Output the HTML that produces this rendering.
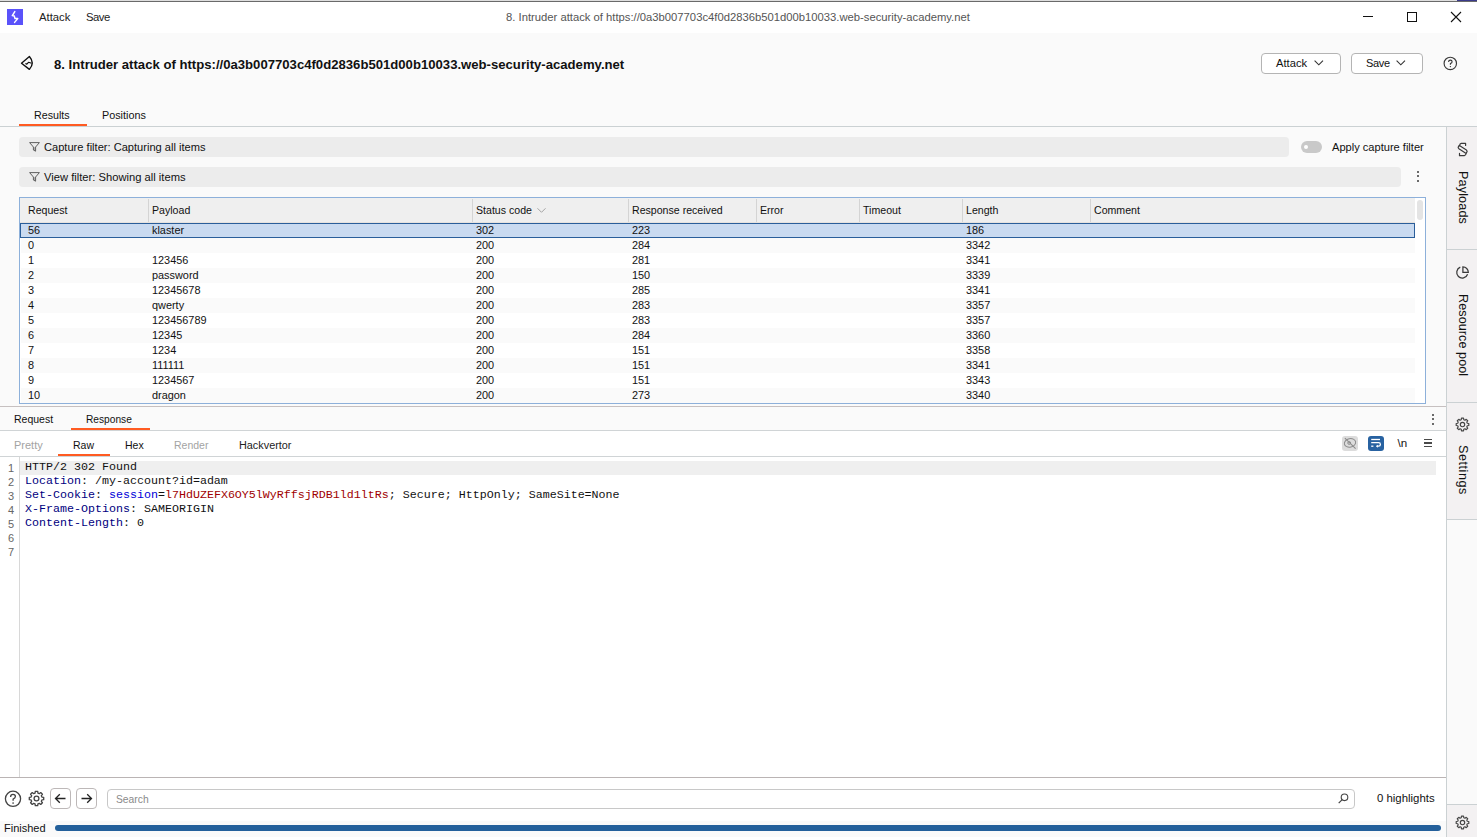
<!DOCTYPE html>
<html><head><meta charset="utf-8">
<style>
*{box-sizing:border-box;margin:0;padding:0}
html,body{width:1477px;height:837px;overflow:hidden}
body{position:relative;background:#fafafa;font-family:"Liberation Sans",sans-serif;color:#111;font-size:11px}
.a{position:absolute}
.t{position:absolute;white-space:nowrap;line-height:11px;font-size:11px}
.hl{position:absolute;height:1px}
.vl{position:absolute;width:1px}
svg{position:absolute;overflow:visible}
</style></head><body>

<!-- top strip -->
<div class="a" style="left:0;top:0;width:1477px;height:1px;background:#dedede"></div>
<div class="a" style="left:0;top:1px;width:1477px;height:1px;background:#6a6a6a"></div>
<div class="a" style="left:1457px;top:0;width:20px;height:1px;background:#3a3a8a"></div>

<!-- title bar -->
<div class="a" style="left:0;top:2px;width:1477px;height:31px;background:#ffffff"></div>
<div class="a" style="left:7px;top:9px;width:16px;height:16px;background:#5a52fa"></div>
<svg style="left:7px;top:9px" width="16" height="16" viewBox="0 0 16 16"><path d="M7.8 2.6 L5.3 6.6 L7.3 7.1 L8.0 9.5 L10.7 9.6 L7.6 13.4" fill="none" stroke="#fff" stroke-width="1.5" stroke-linejoin="round" stroke-linecap="round"/></svg>
<div class="t" style="left:39px;top:11.7px;font-size:11.3px;color:#222">Attack</div>
<div class="t" style="left:86px;top:11.7px;font-size:11.3px;letter-spacing:-0.5px;color:#222">Save</div>
<div class="t" style="left:506px;top:11.5px;font-size:11.25px;color:#555">8. Intruder attack of https://0a3b007703c4f0d2836b501d00b10033.web-security-academy.net</div>
<div class="a" style="left:1363px;top:16px;width:10px;height:1px;background:#111"></div>
<div class="a" style="left:1407px;top:12px;width:10px;height:10px;border:1px solid #111"></div>
<svg style="left:1451px;top:12px" width="10" height="10" viewBox="0 0 10 10"><path d="M0 0L10 10M10 0L0 10" stroke="#111" stroke-width="1.1"/></svg>


<!-- header -->
<svg style="left:20px;top:55px" width="16" height="16" viewBox="0 0 16 16"><path d="M1.5 8.2 L9.4 1.5 Q15.1 7.9 9.4 14.4 Z" fill="none" stroke="#111" stroke-width="1.35" stroke-linejoin="round"/><path d="M5.4 8.5 L6.8 9.2 L8.5 7.3 L11.6 8.3" fill="none" stroke="#111" stroke-width="1.2" stroke-linejoin="round"/></svg>
<div class="t" style="left:54px;top:57.8px;font-size:13.13px;line-height:13px;font-weight:bold;color:#111">8. Intruder attack of https://0a3b007703c4f0d2836b501d00b10033.web-security-academy.net</div>

<div class="a" style="left:1261px;top:53px;width:80px;height:21px;background:#fff;border:1px solid #b4b4b4;border-radius:4px"></div>
<div class="t" style="left:1276px;top:57.7px;font-size:11.2px;color:#111">Attack</div>
<svg style="left:1314px;top:60px" width="10" height="6" viewBox="0 0 10 6"><path d="M0.6 0.6 L4.8 4.8 L9 0.6" fill="none" stroke="#333" stroke-width="1.1"/></svg>
<div class="a" style="left:1351px;top:53px;width:72px;height:21px;background:#fff;border:1px solid #b4b4b4;border-radius:4px"></div>
<div class="t" style="left:1366px;top:57.7px;font-size:11px;letter-spacing:-0.3px;color:#111">Save</div>
<svg style="left:1396px;top:60px" width="10" height="6" viewBox="0 0 10 6"><path d="M0.6 0.6 L4.8 4.8 L9 0.6" fill="none" stroke="#333" stroke-width="1.1"/></svg>
<svg style="left:1443px;top:56px" width="15" height="15" viewBox="0 0 15 15"><circle cx="7.3" cy="7.4" r="6.2" fill="none" stroke="#3a3a3a" stroke-width="1.15"/><path d="M5.6 5.9 Q5.6 4.1 7.35 4.1 Q9.1 4.1 9.1 5.7 Q9.1 6.9 7.4 7.6 L7.4 8.8" fill="none" stroke="#333" stroke-width="1.1"/><circle cx="7.4" cy="10.6" r="0.7" fill="#333"/></svg>

<!-- tabs -->
<div class="t" style="left:34px;top:109.7px;font-size:10.7px;color:#111">Results</div>
<div class="t" style="left:102px;top:109.7px;font-size:10.8px;color:#111">Positions</div>
<div class="a" style="left:19px;top:124px;width:68px;height:2px;background:#ff5b22"></div>
<div class="a" style="left:0;top:126px;width:1477px;height:1px;background:#cbd1d3"></div>

<!-- sidebar -->
<div class="a" style="left:1446px;top:127px;width:1px;height:710px;background:#cbd1d3"></div>
<div class="a" style="left:1447px;top:127px;width:30px;height:392px;background:#f3f1f2"></div>
<div class="a" style="left:1447px;top:249px;width:30px;height:1px;background:#cbd1d3"></div>
<div class="a" style="left:1447px;top:402px;width:30px;height:1px;background:#cbd1d3"></div>
<div class="a" style="left:1447px;top:519px;width:30px;height:1px;background:#cbd1d3"></div>
<div class="a" style="left:1447px;top:804px;width:30px;height:1px;background:#cbd1d3"></div>
<div class="a" style="left:1447px;top:805px;width:30px;height:32px;background:#f3f1f2"></div>

<!-- filters -->
<div class="a" style="left:19px;top:137px;width:1270px;height:20px;background:#ececec;border-radius:4px"></div>
<svg style="left:28.5px;top:142px" width="11" height="10" viewBox="0 0 11 10"><path d="M4.6 5.2 L4.6 8.3 L6.4 9.3 L6.4 5.2 Z" fill="#aaa"/><path d="M0.6 0.6 L10.4 0.6 L6.6 5.0 L6.6 9.2 L4.4 8.0 L4.4 5.0 Z" fill="none" stroke="#606060" stroke-width="1" stroke-linejoin="round"/></svg>
<div class="t" style="left:44px;top:141.5px;font-size:11.1px;color:#111">Capture filter: Capturing all items</div>
<div class="a" style="left:1301px;top:141px;width:21px;height:12px;background:#c9c9c9;border-radius:6px"></div>
<div class="a" style="left:1304px;top:145px;width:4px;height:4px;background:#fff;border-radius:2px"></div>
<div class="t" style="left:1332px;top:141.5px;font-size:11.08px;color:#111">Apply capture filter</div>

<div class="a" style="left:19px;top:167px;width:1382px;height:20px;background:#ececec;border-radius:4px"></div>
<svg style="left:28.5px;top:172px" width="11" height="10" viewBox="0 0 11 10"><path d="M4.6 5.2 L4.6 8.3 L6.4 9.3 L6.4 5.2 Z" fill="#aaa"/><path d="M0.6 0.6 L10.4 0.6 L6.6 5.0 L6.6 9.2 L4.4 8.0 L4.4 5.0 Z" fill="none" stroke="#606060" stroke-width="1" stroke-linejoin="round"/></svg>
<div class="t" style="left:44px;top:171.5px;font-size:11.2px;color:#111">View filter: Showing all items</div>
<div class="a" style="left:1417.2px;top:170.5px;width:2.2px;height:2.2px;background:#3a3a3a;border-radius:50%"></div>
<div class="a" style="left:1417.2px;top:175.2px;width:2.2px;height:2.2px;background:#3a3a3a;border-radius:50%"></div>
<div class="a" style="left:1417.2px;top:179.8px;width:2.2px;height:2.2px;background:#3a3a3a;border-radius:50%"></div>

<!-- table -->
<div class="a" style="left:19px;top:197px;width:1407px;height:207px;background:#fff;border:1px solid #8db0da"></div>
<div class="a" style="left:20px;top:198px;width:1395px;height:25px;background:#efefef"></div>
<div class="a" style="left:20px;top:222px;width:1395px;height:1px;background:#e6e2de"></div>
<div class="a" style="left:148px;top:199px;width:1px;height:23px;background:#d4d4d4"></div>
<div class="a" style="left:472px;top:199px;width:1px;height:23px;background:#d4d4d4"></div>
<div class="a" style="left:628px;top:199px;width:1px;height:23px;background:#d4d4d4"></div>
<div class="a" style="left:756px;top:199px;width:1px;height:23px;background:#d4d4d4"></div>
<div class="a" style="left:859px;top:199px;width:1px;height:23px;background:#d4d4d4"></div>
<div class="a" style="left:962px;top:199px;width:1px;height:23px;background:#d4d4d4"></div>
<div class="a" style="left:1090px;top:199px;width:1px;height:23px;background:#d4d4d4"></div>
<div class="t" style="left:28px;top:204.5px;font-size:10.6px">Request</div>
<div class="t" style="left:152px;top:204.5px;font-size:10.6px">Payload</div>
<div class="t" style="left:476px;top:204.5px;font-size:10.6px">Status code</div>
<div class="t" style="left:632px;top:204.5px;font-size:10.6px">Response received</div>
<div class="t" style="left:760px;top:204.5px;font-size:10.6px">Error</div>
<div class="t" style="left:863px;top:204.5px;font-size:10.6px">Timeout</div>
<div class="t" style="left:966px;top:204.5px;font-size:10.6px">Length</div>
<div class="t" style="left:1094px;top:204.5px;font-size:10.6px">Comment</div>
<svg style="left:537px;top:208px" width="9" height="5" viewBox="0 0 9 5"><path d="M0.5 0.3 L4.5 4.3 L8.5 0.3" fill="none" stroke="#a4a4a4" stroke-width="1"/></svg>
<div class="a" style="left:1417px;top:200px;width:6px;height:20px;background:#e4e4e4;border-radius:3px"></div>
<div class="a" style="left:20px;top:223px;width:1395px;height:15px;background:#c9daf0;border:1px solid #2a5e9a;border-width:1px 1px 1px 1px"></div>
<div class="t" style="left:28px;top:225.4px;font-size:10.9px;color:#111">56</div>
<div class="t" style="left:152px;top:225.4px;font-size:10.9px;color:#111">klaster</div>
<div class="t" style="left:476px;top:225.4px;font-size:10.9px;color:#111">302</div>
<div class="t" style="left:632px;top:225.4px;font-size:10.9px;color:#111">223</div>
<div class="t" style="left:966px;top:225.4px;font-size:10.9px;color:#111">186</div>
<div class="a" style="left:21px;top:238px;width:1394px;height:15px;background:#fafafa"></div>
<div class="t" style="left:28px;top:240.4px;font-size:10.9px;color:#111">0</div>
<div class="t" style="left:476px;top:240.4px;font-size:10.9px;color:#111">200</div>
<div class="t" style="left:632px;top:240.4px;font-size:10.9px;color:#111">284</div>
<div class="t" style="left:966px;top:240.4px;font-size:10.9px;color:#111">3342</div>
<div class="t" style="left:28px;top:255.4px;font-size:10.9px;color:#111">1</div>
<div class="t" style="left:152px;top:255.4px;font-size:10.9px;color:#111">123456</div>
<div class="t" style="left:476px;top:255.4px;font-size:10.9px;color:#111">200</div>
<div class="t" style="left:632px;top:255.4px;font-size:10.9px;color:#111">281</div>
<div class="t" style="left:966px;top:255.4px;font-size:10.9px;color:#111">3341</div>
<div class="a" style="left:21px;top:268px;width:1394px;height:15px;background:#fafafa"></div>
<div class="t" style="left:28px;top:270.4px;font-size:10.9px;color:#111">2</div>
<div class="t" style="left:152px;top:270.4px;font-size:10.9px;color:#111">password</div>
<div class="t" style="left:476px;top:270.4px;font-size:10.9px;color:#111">200</div>
<div class="t" style="left:632px;top:270.4px;font-size:10.9px;color:#111">150</div>
<div class="t" style="left:966px;top:270.4px;font-size:10.9px;color:#111">3339</div>
<div class="t" style="left:28px;top:285.4px;font-size:10.9px;color:#111">3</div>
<div class="t" style="left:152px;top:285.4px;font-size:10.9px;color:#111">12345678</div>
<div class="t" style="left:476px;top:285.4px;font-size:10.9px;color:#111">200</div>
<div class="t" style="left:632px;top:285.4px;font-size:10.9px;color:#111">285</div>
<div class="t" style="left:966px;top:285.4px;font-size:10.9px;color:#111">3341</div>
<div class="a" style="left:21px;top:298px;width:1394px;height:15px;background:#fafafa"></div>
<div class="t" style="left:28px;top:300.4px;font-size:10.9px;color:#111">4</div>
<div class="t" style="left:152px;top:300.4px;font-size:10.9px;color:#111">qwerty</div>
<div class="t" style="left:476px;top:300.4px;font-size:10.9px;color:#111">200</div>
<div class="t" style="left:632px;top:300.4px;font-size:10.9px;color:#111">283</div>
<div class="t" style="left:966px;top:300.4px;font-size:10.9px;color:#111">3357</div>
<div class="t" style="left:28px;top:315.4px;font-size:10.9px;color:#111">5</div>
<div class="t" style="left:152px;top:315.4px;font-size:10.9px;color:#111">123456789</div>
<div class="t" style="left:476px;top:315.4px;font-size:10.9px;color:#111">200</div>
<div class="t" style="left:632px;top:315.4px;font-size:10.9px;color:#111">283</div>
<div class="t" style="left:966px;top:315.4px;font-size:10.9px;color:#111">3357</div>
<div class="a" style="left:21px;top:328px;width:1394px;height:15px;background:#fafafa"></div>
<div class="t" style="left:28px;top:330.4px;font-size:10.9px;color:#111">6</div>
<div class="t" style="left:152px;top:330.4px;font-size:10.9px;color:#111">12345</div>
<div class="t" style="left:476px;top:330.4px;font-size:10.9px;color:#111">200</div>
<div class="t" style="left:632px;top:330.4px;font-size:10.9px;color:#111">284</div>
<div class="t" style="left:966px;top:330.4px;font-size:10.9px;color:#111">3360</div>
<div class="t" style="left:28px;top:345.4px;font-size:10.9px;color:#111">7</div>
<div class="t" style="left:152px;top:345.4px;font-size:10.9px;color:#111">1234</div>
<div class="t" style="left:476px;top:345.4px;font-size:10.9px;color:#111">200</div>
<div class="t" style="left:632px;top:345.4px;font-size:10.9px;color:#111">151</div>
<div class="t" style="left:966px;top:345.4px;font-size:10.9px;color:#111">3358</div>
<div class="a" style="left:21px;top:358px;width:1394px;height:15px;background:#fafafa"></div>
<div class="t" style="left:28px;top:360.4px;font-size:10.9px;color:#111">8</div>
<div class="t" style="left:152px;top:360.4px;font-size:10.9px;color:#111">111111</div>
<div class="t" style="left:476px;top:360.4px;font-size:10.9px;color:#111">200</div>
<div class="t" style="left:632px;top:360.4px;font-size:10.9px;color:#111">151</div>
<div class="t" style="left:966px;top:360.4px;font-size:10.9px;color:#111">3341</div>
<div class="t" style="left:28px;top:375.4px;font-size:10.9px;color:#111">9</div>
<div class="t" style="left:152px;top:375.4px;font-size:10.9px;color:#111">1234567</div>
<div class="t" style="left:476px;top:375.4px;font-size:10.9px;color:#111">200</div>
<div class="t" style="left:632px;top:375.4px;font-size:10.9px;color:#111">151</div>
<div class="t" style="left:966px;top:375.4px;font-size:10.9px;color:#111">3343</div>
<div class="a" style="left:21px;top:388px;width:1394px;height:15px;background:#fafafa"></div>
<div class="t" style="left:28px;top:390.4px;font-size:10.9px;color:#111">10</div>
<div class="t" style="left:152px;top:390.4px;font-size:10.9px;color:#111">dragon</div>
<div class="t" style="left:476px;top:390.4px;font-size:10.9px;color:#111">200</div>
<div class="t" style="left:632px;top:390.4px;font-size:10.9px;color:#111">273</div>
<div class="t" style="left:966px;top:390.4px;font-size:10.9px;color:#111">3340</div>

<!-- splitter + req/resp tabs -->
<div class="a" style="left:0;top:406px;width:1446px;height:1px;background:#c6c0c0"></div>
<div class="a" style="left:0;top:407px;width:1446px;height:23px;background:#fafafa"></div>
<div class="t" style="left:14px;top:413.6px;font-size:10.5px">Request</div>
<div class="t" style="left:86px;top:413.6px;font-size:10.2px">Response</div>
<div class="a" style="left:71px;top:428px;width:79px;height:2px;background:#ff5b22"></div>
<div class="a" style="left:0;top:430px;width:1446px;height:1px;background:#d0d4d6"></div>
<div class="a" style="left:1432.2px;top:413.8px;width:2.2px;height:2.2px;background:#3a3a3a;border-radius:50%"></div>
<div class="a" style="left:1432.2px;top:418.3px;width:2.2px;height:2.2px;background:#3a3a3a;border-radius:50%"></div>
<div class="a" style="left:1432.2px;top:422.8px;width:2.2px;height:2.2px;background:#3a3a3a;border-radius:50%"></div>

<!-- editor toolbar -->
<div class="a" style="left:0;top:431px;width:1446px;height:25px;background:#ffffff"></div>
<div class="t" style="left:14px;top:440.2px;font-size:11px;color:#a3a3a3">Pretty</div>
<div class="t" style="left:73px;top:440.2px;font-size:10.5px">Raw</div>
<div class="t" style="left:125px;top:440.2px;font-size:10.5px">Hex</div>
<div class="t" style="left:174px;top:440.2px;font-size:10.5px;color:#a3a3a3">Render</div>
<div class="t" style="left:239px;top:440.2px;font-size:10.85px;color:#222">Hackvertor</div>
<div class="a" style="left:58px;top:454px;width:52px;height:2px;background:#ff5b22"></div>
<div class="a" style="left:0;top:456px;width:1446px;height:1px;background:#d0d4d6"></div>

<div class="a" style="left:1342px;top:436px;width:16px;height:15px;background:#dcdcdc;border-radius:3px"></div>
<svg style="left:1342px;top:436px" width="16" height="15" viewBox="0 0 16 15"><ellipse cx="8.0" cy="6.9" rx="5.7" ry="4.2" transform="rotate(-12 8 6.9)" fill="none" stroke="#8c8c8c" stroke-width="1"/><circle cx="7.2" cy="7.0" r="1.4" fill="none" stroke="#8c8c8c" stroke-width="1"/><path d="M2.9 2.2 L13.6 12.6" stroke="#8c8c8c" stroke-width="1.1"/></svg>
<div class="a" style="left:1368px;top:436px;width:16px;height:15px;background:#2862a1;border-radius:3px"></div>
<svg style="left:1368px;top:436px" width="16" height="15" viewBox="0 0 16 15"><g fill="none" stroke="#fff" stroke-width="1.3"><path d="M3.2 3.5 H12"/><path d="M3.2 6.6 H10.6 Q12.4 6.6 12.4 8.4 Q12.4 10.2 10.6 10.2 H8.6"/><path d="M3.2 10.2 H5.4"/></g><path d="M9.9 8.7 L8.0 10.2 L9.9 11.7 Z" fill="#fff"/></svg>
<div class="t" style="left:1397.5px;top:436.9px;font-size:11.6px;color:#111">\n</div>
<div class="a" style="left:1424px;top:439px;width:8px;height:1.3px;background:#4a4a4a"></div>
<div class="a" style="left:1424px;top:442.3px;width:8px;height:1.3px;background:#4a4a4a"></div>
<div class="a" style="left:1424px;top:445.6px;width:8px;height:1.3px;background:#4a4a4a"></div>

<!-- editor -->
<div class="a" style="left:0;top:457px;width:1446px;height:320px;background:#ffffff"></div>
<div class="a" style="left:19px;top:457px;width:1px;height:320px;background:#d8d8d8"></div>
<div class="a" style="left:20px;top:461px;width:1416px;height:14px;background:#efefef"></div>
<div class="t" style="left:8px;top:461.0px;font-size:11px;line-height:14px;color:#666">1</div>
<div class="t" style="left:25px;top:460px;font-family:'Liberation Mono',monospace;font-size:11.667px;line-height:14px"><span style="color:#111">HTTP/2 302 Found</span></div>
<div class="t" style="left:8px;top:475.0px;font-size:11px;line-height:14px;color:#666">2</div>
<div class="t" style="left:25px;top:474px;font-family:'Liberation Mono',monospace;font-size:11.667px;line-height:14px"><span style="color:#000080">Location</span><span style="color:#111">: /my-account?id=adam</span></div>
<div class="t" style="left:8px;top:489.0px;font-size:11px;line-height:14px;color:#666">3</div>
<div class="t" style="left:25px;top:488px;font-family:'Liberation Mono',monospace;font-size:11.667px;line-height:14px"><span style="color:#000080">Set-Cookie</span><span style="color:#111">: </span><span style="color:#0000d8">session</span><span style="color:#111">=</span><span style="color:#a00000">l7HdUZEFX6OY5lWyRffsjRDB1ld1ltRs</span><span style="color:#111">; Secure; HttpOnly; SameSite=None</span></div>
<div class="t" style="left:8px;top:503.0px;font-size:11px;line-height:14px;color:#666">4</div>
<div class="t" style="left:25px;top:502px;font-family:'Liberation Mono',monospace;font-size:11.667px;line-height:14px"><span style="color:#000080">X-Frame-Options</span><span style="color:#111">: SAMEORIGIN</span></div>
<div class="t" style="left:8px;top:517.0px;font-size:11px;line-height:14px;color:#666">5</div>
<div class="t" style="left:25px;top:516px;font-family:'Liberation Mono',monospace;font-size:11.667px;line-height:14px"><span style="color:#000080">Content-Length</span><span style="color:#111">: 0</span></div>
<div class="t" style="left:8px;top:531.0px;font-size:11px;line-height:14px;color:#666">6</div>
<div class="t" style="left:8px;top:545.0px;font-size:11px;line-height:14px;color:#666">7</div>

<div class="a" style="left:0;top:777px;width:1446px;height:1px;background:#bab4b4"></div>

<!-- bottom bar -->
<div class="a" style="left:0;top:778px;width:1446px;height:43px;background:#ffffff"></div>
<svg style="left:4px;top:790px" width="18" height="18" viewBox="0 0 18 18"><circle cx="9" cy="8.8" r="7.6" fill="none" stroke="#444" stroke-width="1.3"/><path d="M6.6 6.9 Q6.6 4.4 9 4.4 Q11.4 4.4 11.4 6.6 Q11.4 8.2 9.1 9.2 L9.1 10.8" fill="none" stroke="#444" stroke-width="1.3"/><circle cx="9.1" cy="13" r="0.85" fill="#444"/></svg>
<div class="a" style="left:50px;top:788px;width:21px;height:21px;border:1px solid #bdb8b8;border-radius:4px;background:#fff"></div>
<svg style="left:50px;top:788px" width="21" height="21" viewBox="0 0 21 21"><path d="M15.5 10.5 H5.5 M9.8 6.2 L5.5 10.5 L9.8 14.8" fill="none" stroke="#222" stroke-width="1.3"/></svg>
<div class="a" style="left:76px;top:788px;width:21px;height:21px;border:1px solid #bdb8b8;border-radius:4px;background:#fff"></div>
<svg style="left:76px;top:788px" width="21" height="21" viewBox="0 0 21 21"><path d="M5.5 10.5 H15.5 M11.2 6.2 L15.5 10.5 L11.2 14.8" fill="none" stroke="#222" stroke-width="1.3"/></svg>
<div class="a" style="left:107px;top:789px;width:1248px;height:20px;border:1px solid #c8c8c8;border-radius:4px;background:#fff"></div>
<div class="t" style="left:116px;top:793.5px;font-size:10.3px;color:#8a8a8a">Search</div>
<svg style="left:1338px;top:793.3px" width="11" height="11" viewBox="0 0 11 11"><circle cx="6.5" cy="4.3" r="3.3" fill="none" stroke="#444" stroke-width="1.1"/><path d="M4.2 6.6 L0.7 10.1" stroke="#444" stroke-width="1.2"/></svg>
<div class="t" style="left:1377px;top:793.4px;font-size:11.4px">0 highlights</div>

<!-- status -->
<div class="a" style="left:0;top:821px;width:1446px;height:16px;background:#fafafa"></div>
<div class="t" style="left:4px;top:822.6px;font-size:11px">Finished</div>
<div class="a" style="left:55px;top:825px;width:1386px;height:6px;background:#24609b;border-radius:3px"></div>


<!-- gears -->
<svg style="left:27.8px;top:790.2px" width="17" height="17" viewBox="0 0 17 17"><path d="M7.06 3.09 L7.30 1.30 L9.70 1.30 L9.94 3.09 L11.31 3.66 L12.74 2.56 L14.44 4.26 L13.34 5.69 L13.91 7.06 L15.70 7.30 L15.70 9.70 L13.91 9.94 L13.34 11.31 L14.44 12.74 L12.74 14.44 L11.31 13.34 L9.94 13.91 L9.70 15.70 L7.30 15.70 L7.06 13.91 L5.69 13.34 L4.26 14.44 L2.56 12.74 L3.66 11.31 L3.09 9.94 L1.30 9.70 L1.30 7.30 L3.09 7.06 L3.66 5.69 L2.56 4.26 L4.26 2.56 L5.69 3.66 Z" fill="none" stroke="#444" stroke-width="1.3" stroke-linejoin="round"/><circle cx="8.5" cy="8.5" r="2.4" fill="none" stroke="#444" stroke-width="1.3"/></svg>
<svg style="left:1455px;top:417px" width="15" height="15" viewBox="0 0 15 15"><path d="M6.23 2.72 L6.45 1.19 L8.55 1.19 L8.77 2.72 L9.99 3.22 L11.22 2.29 L12.71 3.78 L11.78 5.01 L12.28 6.23 L13.81 6.45 L13.81 8.55 L12.28 8.77 L11.78 9.99 L12.71 11.22 L11.22 12.71 L9.99 11.78 L8.77 12.28 L8.55 13.81 L6.45 13.81 L6.23 12.28 L5.01 11.78 L3.78 12.71 L2.29 11.22 L3.22 9.99 L2.72 8.77 L1.19 8.55 L1.19 6.45 L2.72 6.23 L3.22 5.01 L2.29 3.78 L3.78 2.29 L5.01 3.22 Z" fill="none" stroke="#444" stroke-width="1.15" stroke-linejoin="round"/><circle cx="7.5" cy="7.5" r="2.2" fill="none" stroke="#444" stroke-width="1.15"/></svg>
<svg style="left:1455px;top:815px" width="15" height="15" viewBox="0 0 15 15"><path d="M6.23 2.72 L6.45 1.19 L8.55 1.19 L8.77 2.72 L9.99 3.22 L11.22 2.29 L12.71 3.78 L11.78 5.01 L12.28 6.23 L13.81 6.45 L13.81 8.55 L12.28 8.77 L11.78 9.99 L12.71 11.22 L11.22 12.71 L9.99 11.78 L8.77 12.28 L8.55 13.81 L6.45 13.81 L6.23 12.28 L5.01 11.78 L3.78 12.71 L2.29 11.22 L3.22 9.99 L2.72 8.77 L1.19 8.55 L1.19 6.45 L2.72 6.23 L3.22 5.01 L2.29 3.78 L3.78 2.29 L5.01 3.22 Z" fill="none" stroke="#444" stroke-width="1.15" stroke-linejoin="round"/><circle cx="7.5" cy="7.5" r="2.2" fill="none" stroke="#444" stroke-width="1.15"/></svg>

<!-- sidebar content -->
<svg style="left:1450px;top:136px" width="24" height="24" viewBox="0 0 24 24"><g fill="none" stroke="#3a3a3a" stroke-width="1.2" stroke-linejoin="round" stroke-linecap="round"><path d="M15.6 9.4 L15.6 7.4 L11.2 7.4 Q9.9 7.5 9.5 9.7"/><path d="M9.8 9.7 L16.4 14.0 Q17.8 15.2 16.6 16.6 Q16.0 17.4 15.0 16.8 L8.9 12.8 Q7.6 11.8 8.5 10.4 Q9.0 9.5 9.8 9.7 Z"/><path d="M16.2 16.9 Q15.9 19.5 14.4 19.7 L9.5 19.7 L9.5 17.4"/></g></svg>
<div class="t" style="left:1468px;top:171.3px;font-size:12.6px;letter-spacing:0.15px;color:#111;transform-origin:0 0;transform:rotate(90deg)">Payloads</div>
<svg style="left:1450px;top:260px" width="24" height="24" viewBox="0 0 24 24"><g fill="none" stroke="#3a3a3a" stroke-width="1.25" stroke-linejoin="miter"><path d="M10.28 7.2 A5.6 5.6 0 1 0 17.6 14.3"/><path d="M12.9 6.9 L12.9 12.3 L18.3 12.3 A5.4 5.4 0 0 0 12.9 6.9 Z"/></g></svg>
<div class="t" style="left:1468px;top:294px;font-size:12.6px;letter-spacing:0.08px;color:#111;transform-origin:0 0;transform:rotate(90deg)">Resource pool</div>
<div class="t" style="left:1468px;top:445.3px;font-size:12.6px;letter-spacing:0.55px;color:#111;transform-origin:0 0;transform:rotate(90deg)">Settings</div>

</body></html>
